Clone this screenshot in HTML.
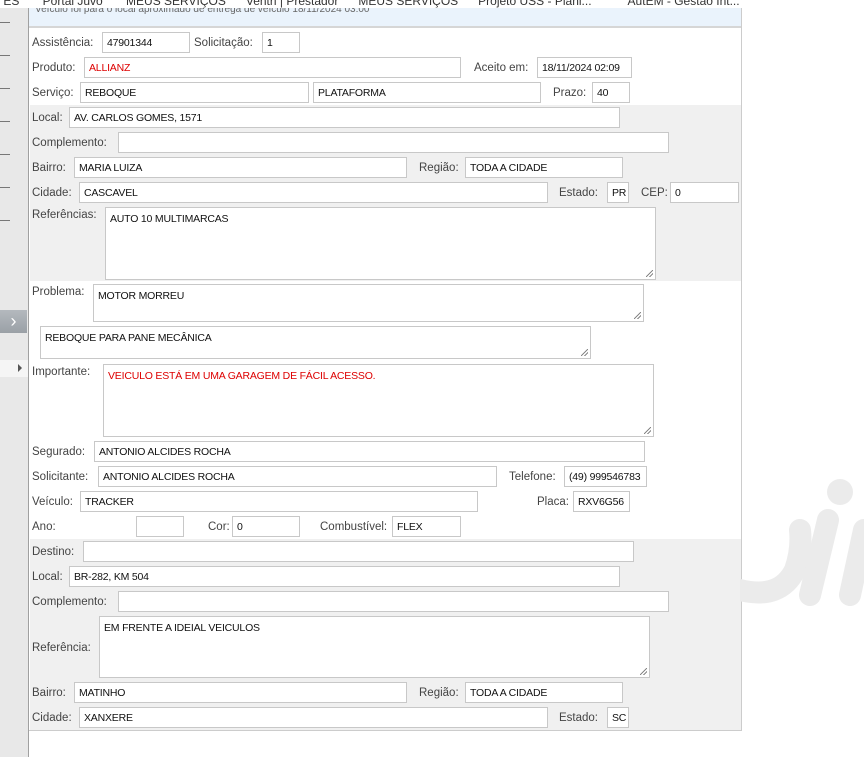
<!DOCTYPE html>
<html><head><meta charset="utf-8">
<style>
*{margin:0;padding:0;box-sizing:border-box}
body{width:864px;height:757px;overflow:hidden;background:#fff;font-family:"Liberation Sans",Tahoma,sans-serif;font-size:11px;color:#333;position:relative}
.a{position:absolute}
.l{position:absolute;color:#444;font-size:11.5px;line-height:14px;top:0}
.i{position:absolute;background:#fff;border:1px solid #c8c8c8;height:21px;padding:0 4px;line-height:21px;font-size:10.5px;color:#111;white-space:nowrap;overflow:hidden;letter-spacing:-0.2px}
.t{position:absolute;background:#fff;border:1px solid #c8c8c8;padding:5px 4px;font-size:10.5px;color:#111;letter-spacing:-0.2px}
.t:after{content:"";position:absolute;right:2px;bottom:2px;width:7px;height:7px;background:linear-gradient(135deg,transparent 45%,#888 46%,#888 54%,transparent 55%,transparent 70%,#888 71%,#888 79%,transparent 80%)}
.r{color:#d00}
.g{position:absolute;background:#f0f0f0;left:30px;width:711px}
.sl{position:absolute;left:0;width:10px;height:1px;background:#777}
</style></head><body>
<div class="a" style="left:0;top:0;width:864px;height:8px;overflow:hidden;font-size:12px;color:#333;line-height:2px;white-space:nowrap">&nbsp;ES &nbsp;&nbsp;&nbsp;&nbsp;&nbsp; Portal Juvo &nbsp;&nbsp;&nbsp;&nbsp;&nbsp; MEUS SERVIÇOS &nbsp;&nbsp;&nbsp;&nbsp; Ventri | Prestador &nbsp;&nbsp;&nbsp;&nbsp; MEUS SERVIÇOS &nbsp;&nbsp;&nbsp;&nbsp; Projeto USS - Plani... &nbsp;&nbsp;&nbsp;&nbsp;&nbsp;&nbsp;&nbsp;&nbsp;&nbsp; AutEM - Gestão Int...</div>
<div class="a" style="left:0;top:8px;width:28px;height:749px;background:#e8e8e8"></div>
<div class="sl" style="top:22px"></div><div class="sl" style="top:55px"></div><div class="sl" style="top:88px"></div><div class="sl" style="top:121px"></div><div class="sl" style="top:154px"></div><div class="sl" style="top:187px"></div><div class="sl" style="top:220px"></div>
<div class="a" style="left:0;top:310px;width:27px;height:23px;background:linear-gradient(#b4b9be,#9aa0a6);color:#fff;font-size:18px;text-align:center;line-height:22px">&#8250;</div>
<div class="a" style="left:0;top:360px;width:28px;height:17px;background:#f5f5f5"></div>
<div class="a" style="left:18px;top:364px;width:0;height:0;border-left:4px solid #555;border-top:4px solid transparent;border-bottom:4px solid transparent"></div>
<div class="a" style="left:28px;top:8px;width:1px;height:749px;background:#a0a0a0"></div>
<div class="a" style="left:29px;top:8px;width:713px;height:723px;border:1px solid #ccc;border-left:none;background:#fff"></div>
<div class="a" style="left:29px;top:8px;width:712px;height:20px;background:#eaf3fc;border-bottom:2px solid #d6d6d6;font-size:10px;color:#666;line-height:4px;overflow:hidden;padding-left:6px">Veículo foi para o local aproximado de entrega de veículo 18/11/2024 03:00</div>
<div class="g" style="top:105px;height:176px"></div>
<div class="g" style="top:539px;height:191px"></div>
<svg class="a" style="left:740px;top:470px" width="124" height="140"><circle cx="100" cy="22" r="13" fill="#ebebeb"/><path d="M0 120 Q40 130 55 100 Q62 80 60 60" stroke="#ebebeb" stroke-width="22" fill="none" stroke-linecap="round"/><path d="M88 50 L70 125" stroke="#ebebeb" stroke-width="22" stroke-linecap="round"/><path d="M124 60 L110 125" stroke="#ebebeb" stroke-width="22" stroke-linecap="round"/></svg>

<div class="l" style="left:32px;top:36px">Assistência:</div><div class="i" style="left:102px;top:32px;width:88px">47901344</div>
<div class="l" style="left:194px;top:36px">Solicitação:</div><div class="i" style="left:262px;top:32px;width:38px">1</div>
<div class="l" style="left:32px;top:61px">Produto:</div><div class="i r" style="left:84px;top:57px;width:377px">ALLIANZ</div>
<div class="l" style="left:474px;top:61px">Aceito em:</div><div class="i" style="left:537px;top:57px;width:95px">18/11/2024 02:09</div>
<div class="l" style="left:32px;top:86px">Serviço:</div><div class="i" style="left:80px;top:82px;width:229px">REBOQUE</div>
<div class="i" style="left:313px;top:82px;width:228px">PLATAFORMA</div>
<div class="l" style="left:553px;top:86px">Prazo:</div><div class="i" style="left:592px;top:82px;width:38px">40</div>

<div class="l" style="left:32px;top:111px">Local:</div><div class="i" style="left:69px;top:107px;width:551px">AV. CARLOS GOMES, 1571</div>
<div class="l" style="left:32px;top:136px">Complemento:</div><div class="i" style="left:118px;top:132px;width:551px"></div>
<div class="l" style="left:32px;top:161px">Bairro:</div><div class="i" style="left:74px;top:157px;width:333px">MARIA LUIZA</div>
<div class="l" style="left:419px;top:161px">Região:</div><div class="i" style="left:465px;top:157px;width:158px">TODA A CIDADE</div>
<div class="l" style="left:32px;top:186px">Cidade:</div><div class="i" style="left:79px;top:182px;width:469px">CASCAVEL</div>
<div class="l" style="left:559px;top:186px">Estado:</div><div class="i" style="left:607px;top:182px;width:22px">PR</div>
<div class="l" style="left:641px;top:186px">CEP:</div><div class="i" style="left:670px;top:182px;width:69px">0</div>
<div class="l" style="left:32px;top:208px">Referências:</div><div class="t" style="left:105px;top:207px;width:551px;height:73px">AUTO 10 MULTIMARCAS</div>

<div class="l" style="left:32px;top:285px">Problema:</div><div class="t" style="left:93px;top:284px;width:551px;height:38px">MOTOR MORREU</div>
<div class="t" style="left:40px;top:326px;width:551px;height:33px">REBOQUE PARA PANE MECÂNICA</div>
<div class="l" style="left:32px;top:365px">Importante:</div><div class="t r" style="left:103px;top:364px;width:551px;height:73px">VEICULO ESTÁ EM UMA GARAGEM DE FÁCIL ACESSO.</div>

<div class="l" style="left:32px;top:445px">Segurado:</div><div class="i" style="left:94px;top:441px;width:551px">ANTONIO ALCIDES ROCHA</div>
<div class="l" style="left:32px;top:470px">Solicitante:</div><div class="i" style="left:98px;top:466px;width:399px">ANTONIO ALCIDES ROCHA</div>
<div class="l" style="left:509px;top:470px">Telefone:</div><div class="i" style="left:564px;top:466px;width:83px">(49) 999546783</div>
<div class="l" style="left:32px;top:495px">Veículo:</div><div class="i" style="left:80px;top:491px;width:398px">TRACKER</div>
<div class="l" style="left:537px;top:495px">Placa:</div><div class="i" style="left:573px;top:491px;width:57px">RXV6G56</div>
<div class="l" style="left:32px;top:520px">Ano:</div><div class="i" style="left:136px;top:516px;width:48px"></div>
<div class="l" style="left:208px;top:520px">Cor:</div><div class="i" style="left:232px;top:516px;width:68px">0</div>
<div class="l" style="left:320px;top:520px">Combustível:</div><div class="i" style="left:392px;top:516px;width:69px">FLEX</div>

<div class="l" style="left:32px;top:545px">Destino:</div><div class="i" style="left:83px;top:541px;width:551px"></div>
<div class="l" style="left:32px;top:570px">Local:</div><div class="i" style="left:69px;top:566px;width:551px">BR-282, KM 504</div>
<div class="l" style="left:32px;top:595px">Complemento:</div><div class="i" style="left:118px;top:591px;width:551px"></div>
<div class="l" style="left:32px;top:641px">Referência:</div><div class="t" style="left:99px;top:616px;width:551px;height:62px">EM FRENTE A IDEIAL VEICULOS</div>
<div class="l" style="left:32px;top:686px">Bairro:</div><div class="i" style="left:74px;top:682px;width:333px">MATINHO</div>
<div class="l" style="left:419px;top:686px">Região:</div><div class="i" style="left:465px;top:682px;width:158px">TODA A CIDADE</div>
<div class="l" style="left:32px;top:711px">Cidade:</div><div class="i" style="left:79px;top:707px;width:469px">XANXERE</div>
<div class="l" style="left:559px;top:711px">Estado:</div><div class="i" style="left:607px;top:707px;width:22px">SC</div>
</body></html>
